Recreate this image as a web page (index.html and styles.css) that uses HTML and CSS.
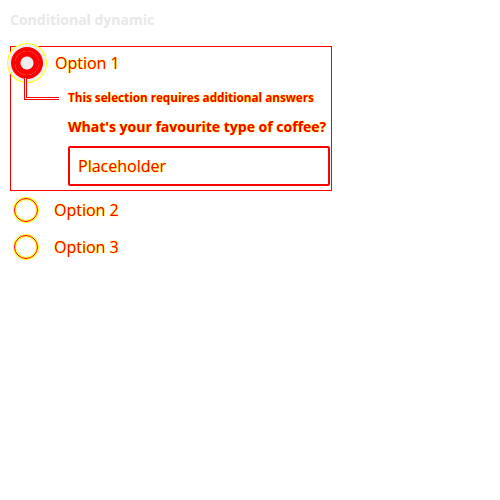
FILE: index.html
```html
<!DOCTYPE html>
<html lang="en">
<head>
<meta charset="utf-8">
<link rel="stylesheet" href="styles.css">
</head>
<body>
  <h1 class="title">Conditional dynamic</h1>
  <div class="options">
    <div class="option-card">
      <div class="option-row">
        <span class="radio checked"></span>
        <span class="option-label">Option 1</span>
      </div>
      <svg class="connector" width="40" height="30" viewBox="0 0 40 30">
        <path d="M1.5 0 V20.5 H35" fill="none" stroke="#ff0000" stroke-width="3"/>
        <path d="M1.5 0 V20.5 H35" fill="none" stroke="#ffffff" stroke-width="1"/>
      </svg>
      <div class="conditional">
        <p class="hint">This selection requires additional answers</p>
        <p class="question">What's your favourite type of coffee?</p>
        <input class="field" type="text" placeholder="Placeholder">
      </div>
    </div>
    <div class="option-row plain">
      <span class="radio"></span>
      <span class="option-label">Option 2</span>
    </div>
    <div class="option-row plain">
      <span class="radio"></span>
      <span class="option-label">Option 3</span>
    </div>
  </div>
</body>
</html>
```
FILE: styles.css
```css
html, body {
  margin: 0;
  background: #ffffff;
}
body {
  padding: 10px;
  font-family: "Open Sans", "Noto Sans", sans-serif;
}
.title {
  margin: 0;
  font-size: 14px;
  line-height: 20px;
  font-weight: 700;
  color: #e8e8e8;
}
.options {
  margin-top: 16px;
  display: flex;
  flex-direction: column;
}
.option-card {
  position: relative;
  width: 316px;
  border: 1px solid #ff0000;
  padding: 4px 0 4px 4px;
}
.option-row {
  display: flex;
  align-items: center;
  gap: 16px;
  height: 24px;
}
.option-row.plain {
  padding-left: 4px;
  margin-top: 13px;
}
.option-card + .option-row.plain {
  margin-top: 7px;
}
.radio {
  flex: none;
  width: 24px;
  height: 24px;
  box-sizing: border-box;
  border-radius: 50%;
  border: 1.5px solid #ff0000;
  box-shadow: 0 0 1px 1px #ffff00, inset 0 0 1px 1px #ffff00;
}
.radio.checked {
  border: none;
  background: radial-gradient(circle, #eeeeee 0 6px, #ff0000 7px);
  box-shadow: 0 0 0 4px #ff0000, 0 0 0 6px #eeeeee, 0 0 0 7px #f4f4f4, 0 0 0 8px #ffff00;
}
.option-label,
.hint,
.question,
.field::placeholder {
  color: #ff0000;
  text-shadow: 0 0 1px #ffff00, 0 0 1px #ffff00;
}
.option-label {
  font-size: 16px;
  line-height: 24px;
}
.connector {
  position: absolute;
  left: 13px;
  top: 31px;
}
.conditional {
  padding-left: 53px;
  display: flex;
  flex-direction: column;
}
.hint {
  margin: 14px 0 0;
  font-size: 11.7px;
  line-height: 16px;
  font-weight: 700;
}
.question {
  margin: 12px 0 0;
  font-size: 14px;
  line-height: 20px;
  font-weight: 700;
}
.field {
  margin-top: 9px;
  height: 40px;
  box-sizing: border-box;
  width: 262px;
  border: 2px solid #ff0000;
  border-radius: 2px;
  padding: 0 8px;
  font-family: "Open Sans", "Noto Sans", sans-serif;
  font-size: 16px;
  background: #ffffff;
  outline: none;
}
```
